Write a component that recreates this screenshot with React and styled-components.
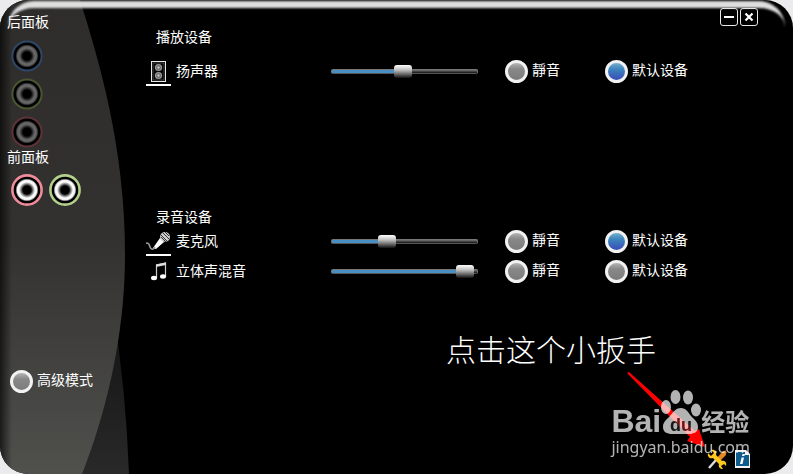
import React, { useState } from "react";
import styled, { createGlobalStyle } from "styled-components";

const GlobalStyle = createGlobalStyle`
  * { box-sizing: border-box; }
  body {
    margin: 0;
    background: #ebebee;
    color: #fff;
    font: 14px/18px "Noto Sans CJK SC", sans-serif;
  }
  button, input { margin: 0; padding: 0; font: inherit; color: inherit; }
`;

const Window = styled.div`
  position: relative;
  display: flex;
  min-height: 100vh;
  overflow: hidden;
  border-radius: 28px;
  background: #000;
`;

const Gloss = styled.div`
  position: absolute;
  top: 1px;
  left: 8px;
  right: 8px;
  height: 48px;
  border-top: 7px solid #dedede;
  border-radius: 26px 26px 0 0;
  filter: blur(1px);
  pointer-events: none;
`;

const Sidebar = styled.aside`
  position: relative;
  display: flex;
  flex-direction: column;
  flex: none;
  width: 130px;
  padding: 13px 7px 81px;
`;

const SidebarShape = styled.svg`
  position: absolute;
  inset: 0;
  width: 100%;
  height: 100%;
`;

const Panel = styled.section`
  position: relative;
`;

const PanelTitle = styled.h2`
  margin: 0;
  padding-bottom: 2px;
  font-size: 14px;
  line-height: 16px;
  font-weight: 400;
`;

const Jacks = styled.div`
  display: flex;
  flex-direction: ${(p) => (p.$stacked ? "column" : "row")};
  gap: 6px;
  padding: ${(p) => (p.$stacked ? "9px 4px 0" : "8px 4px 0")};
`;

const JackButton = styled.button`
  display: block;
  width: 32px;
  height: 32px;
  border: 0;
  border-radius: 50%;
  background: none;
`;

const Main = styled.main`
  display: flex;
  flex-direction: column;
  flex: 1;
  min-width: 0;
`;

const TitleBar = styled.header`
  display: flex;
  justify-content: flex-end;
  gap: 2px;
  padding: 8px 35px 0 0;
`;

const WindowButton = styled.button`
  display: grid;
  place-items: center;
  width: 18px;
  height: 18px;
  border: 1px solid #e8e8e8;
  border-radius: 3px;
  background: #000;
`;

const DeviceGroup = styled.section`
  padding: ${(p) => (p.$first ? "2px 0 0 16px" : "122px 0 0 16px")};
`;

const GroupTitle = styled.h2`
  margin: 0;
  padding: 0 0 ${(p) => (p.$spaced ? "12px" : "2px")} 10px;
  font-size: 14px;
  line-height: 16px;
  font-weight: 400;
`;

const DeviceRow = styled.div`
  display: grid;
  grid-template-columns: 25px 150px minmax(80px, 1fr) 100px 90px;
  align-items: center;
  height: 30px;
  padding-right: 117px;
`;

const DeviceIcon = styled.div`
  display: flex;
  justify-content: center;
  height: 27px;
  border-bottom: 2px solid ${(p) => (p.$active ? "#fff" : "transparent")};
  align-self: end;
`;

const DeviceName = styled.label`
  padding: 0 0 2px 5px;
`;

const Volume = styled.input.attrs({ type: "range" })`
  appearance: none;
  width: calc(100% - 18px);
  height: 14px;
  margin: 0 8px 0 10px;
  background: none;

  &::-webkit-slider-runnable-track {
    height: 5px;
    border: 1px solid #777;
    border-bottom-color: #555;
    border-radius: 2px;
    background: linear-gradient(#4a8fc4, #4a8fc4) 0 0 / var(--fill) 100% no-repeat,
      linear-gradient(#777, #111);
  }
  &::-webkit-slider-thumb {
    appearance: none;
    width: 18px;
    height: 13px;
    margin-top: -5px;
    border-radius: 3px;
    background: linear-gradient(#fff, #bbb 40%, #777 65%, #111);
  }
`;

const Option = styled.label`
  display: flex;
  align-items: center;
  gap: 4px;
  white-space: nowrap;
`;

const OptionText = styled.span`
  padding-bottom: 5px;
`;

const Dot = styled.input`
  appearance: none;
  flex: none;
  width: 23px;
  height: 23px;
  border: 3px solid #f2f2f2;
  border-radius: 50%;
  background: linear-gradient(#b4b4b4, #888 35%, #7c7c7c);

  &:checked {
    background: linear-gradient(#78aed0, #3d86bd 35%, #3a55b8 90%);
  }
`;

const DeviceOption = styled(Option)`
  padding-left: 19px;
`;

const AdvancedOption = styled(Option)`
  position: relative;
  margin-top: auto;
  padding-left: 3px;
`;

const Footer = styled.footer`
  display: flex;
  justify-content: flex-end;
  align-items: center;
  gap: 8px;
  margin-top: auto;
  padding: 0 43px 5px 0;
`;

const ToolButton = styled.button`
  display: block;
  height: 20px;
  border: 0;
  background: none;
`;

const Callout = styled.div`
  position: absolute;
  right: 137px;
  bottom: 106px;
  font-size: 30px;
  font-weight: 300;
  line-height: 40px;
  white-space: nowrap;
`;

const Arrow = styled.svg`
  position: absolute;
  right: 87px;
  bottom: 26px;
  pointer-events: none;
`;

const Watermark = styled.div`
  position: absolute;
  right: 43px;
  bottom: 17px;
  opacity: 0.7;
  pointer-events: none;
`;

const Brand = styled.div`
  display: flex;
  align-items: flex-end;
  height: 48px;
  font: 700 32px/32px "Liberation Sans", sans-serif;
`;

const BrandName = styled.span`
  height: 32px;
`;

const BrandSuffix = styled.span`
  font: 700 24px/32px "Noto Sans CJK SC", sans-serif;
`;

const Site = styled.div`
  font: 16px/20px "Noto Sans", sans-serif;
`;

function Jack({ ring, dim, label }) {
  const id = `jack-${label}`;
  return (
    <JackButton aria-label={label}>
      <svg width="32" height="32" viewBox="0 0 32 32">
        <defs>
          <radialGradient id={id}>
            <stop offset="0.36" stopColor="#000" />
            <stop offset="0.56" stopColor={dim ? "#444" : "#999"} />
            <stop offset="0.7" stopColor={dim ? "#6c6c6c" : "#fff"} />
            <stop offset="0.86" stopColor={dim ? "#5a5a5a" : "#f0f0f0"} />
            <stop offset="1" stopColor="#000" />
          </radialGradient>
        </defs>
        <circle cx="16" cy="16" r="14.6" fill="#000" stroke={ring} strokeWidth={dim ? 2 : 2.6} />
        <circle cx="16" cy="16" r="11.5" fill={`url(#${id})`} />
      </svg>
    </JackButton>
  );
}

function SpeakerIcon() {
  return (
    <svg width="25" height="25" viewBox="0 0 25 25">
      <rect x="5.5" y="2.5" width="14" height="20" fill="#080808" stroke="#e8e8e8" />
      <rect x="7" y="4" width="11" height="17" fill="none" stroke="#666" strokeWidth="0.6" />
      <circle cx="12.5" cy="8.5" r="3.6" fill="#999" />
      <circle cx="12.5" cy="16.5" r="3.6" fill="#999" />
      <circle cx="12.5" cy="8.5" r="2" fill="none" stroke="#666" />
      <circle cx="12.5" cy="16.5" r="2" fill="none" stroke="#666" />
      <circle cx="12.5" cy="8.5" r="0.8" fill="#ccc" />
      <circle cx="12.5" cy="16.5" r="0.8" fill="#ccc" />
    </svg>
  );
}

function MicIcon() {
  return (
    <svg width="25" height="25" viewBox="0 0 25 25">
      <path d="M14 9 18 13 10 20 7 19Z" fill="#fff" />
      <circle cx="19" cy="8" r="5" fill="#ccc" />
      <path d="m15 6 6 6m-4-8 6 6m-4-7 4 4m-8 1 5 5" stroke="#333" strokeWidth="1" />
      <path d="M9 18c-2 3-4 3-5 0s-1-4-4-4" fill="none" stroke="#999" strokeWidth="1.6" />
    </svg>
  );
}

function NotesIcon() {
  return (
    <svg width="25" height="25" viewBox="0 0 25 25">
      <path d="M10.500 19V6l9-2v14" fill="none" stroke="#ccc" strokeWidth="1.2" />
      <path d="M10 5.500 20 3.500V6l-10 2Z" fill="#ddd" />
      <ellipse cx="8" cy="19" rx="3" ry="2.2" fill="#fff" />
      <ellipse cx="17" cy="17.500" rx="3" ry="2.2" fill="#fff" />
    </svg>
  );
}

function Device({ id, name, icon, active, initial, isDefault }) {
  const [level, setLevel] = useState(initial);
  return (
    <DeviceRow>
      <DeviceIcon $active={active}>{icon}</DeviceIcon>
      <DeviceName htmlFor={id}>{name}</DeviceName>
      <Volume
        id={id}
        value={level}
        onChange={(e) => setLevel(Number(e.target.value))}
        style={{ "--fill": `${level}%` }}
      />
      <DeviceOption>
        <Dot type="checkbox" />
        <OptionText>靜音</OptionText>
      </DeviceOption>
      <DeviceOption>
        <Dot type="checkbox" defaultChecked={isDefault} />
        <OptionText>默认设备</OptionText>
      </DeviceOption>
    </DeviceRow>
  );
}

export default function App() {
  return (
    <>
      <GlobalStyle />
      <Window>
        <Sidebar>
          <SidebarShape viewBox="0 0 130 474" preserveAspectRatio="none" aria-hidden="true">
            <defs>
              <linearGradient id="side" x2="0" y2="1">
                <stop offset="0" stopColor="#2e2d2b" />
                <stop offset="0.5" stopColor="#32312f" />
                <stop offset="1" stopColor="#50504d" />
              </linearGradient>
              <linearGradient id="edge">
                <stop offset="0" stopColor="#000" stopOpacity="0.65" />
                <stop offset="1" stopColor="#000" stopOpacity="0" />
              </linearGradient>
              <linearGradient id="under" x2="0" y2="1">
                <stop offset="0.3" stopColor="#181818" />
                <stop offset="1" stopColor="#292929" />
              </linearGradient>
            </defs>
            <path d="M60 300H112Q126 390 129 474H60Z" fill="url(#under)" />
            <path d="M0 0H80C98 58 125 145 125 255C125 340 104 418 82 474H0Z" fill="url(#side)" />
            <rect width="12" height="474" fill="url(#edge)" />
          </SidebarShape>
          <Panel>
            <PanelTitle>后面板</PanelTitle>
            <Jacks $stacked>
              <Jack label="rear-blue" ring="#2d4868" dim />
              <Jack label="rear-green" ring="#4a5630" dim />
              <Jack label="rear-red" ring="#5c3438" dim />
            </Jacks>
          </Panel>
          <Panel>
            <PanelTitle>前面板</PanelTitle>
            <Jacks>
              <Jack label="front-pink" ring="#ef8c99" />
              <Jack label="front-green" ring="#b2cf8c" />
            </Jacks>
          </Panel>
          <AdvancedOption>
            <Dot type="checkbox" />
            <OptionText>高级模式</OptionText>
          </AdvancedOption>
        </Sidebar>
        <Gloss />
        <Main>
          <TitleBar>
            <WindowButton aria-label="最小化">
              <svg width="12" height="12" viewBox="0 0 12 12">
                <path d="M1 6h10" stroke="#fff" strokeWidth="2" />
              </svg>
            </WindowButton>
            <WindowButton aria-label="关闭">
              <svg width="12" height="12" viewBox="0 0 12 12">
                <path d="m2.5 2.5 7 7m0-7-7 7" stroke="#fff" strokeWidth="2.2" />
              </svg>
            </WindowButton>
          </TitleBar>
          <DeviceGroup $first>
            <GroupTitle $spaced>播放设备</GroupTitle>
            <Device id="speaker" name="扬声器" icon={<SpeakerIcon />} active initial={49} isDefault />
          </DeviceGroup>
          <DeviceGroup>
            <GroupTitle>录音设备</GroupTitle>
            <Device id="mic" name="麦克风" icon={<MicIcon />} active initial={36} isDefault />
            <Device id="mix" name="立体声混音" icon={<NotesIcon />} initial={98} />
          </DeviceGroup>
          <Footer>
            <ToolButton aria-label="设置">
              <svg width="20" height="20" viewBox="0 0 20 20">
                <path d="M2 19 9 11" stroke="#ddd" strokeWidth="2.4" />
                <path d="m9.500 9.500 6-7 3-1 1 2-1 3-6 6Z" fill="#e38a24" />
                <path d="M1 4 4 7 7 4 4 1C8 0 10 3 9 6l6 6c3-1 5 2 4 5l-2-2-3 2 2 3c-3 0-5-2-4-5L6 9C3 10 0 8 1 4Z" fill="#ffc81e" />
              </svg>
            </ToolButton>
            <ToolButton aria-label="信息">
              <svg width="15" height="20" viewBox="0 0 15 20">
                <path d="M0 1H11L15 5V19H0Z" fill="#f2f2f2" />
                <path d="M1 3H10V6H14V17H1Z" fill="#105c8c" />
                <path d="M7.500 5H10l-.6 2H7ZM6.600 8.500H9L7.500 15H5Z" fill="#fff" />
              </svg>
            </ToolButton>
          </Footer>
        </Main>
        <Callout>点击这个小扳手</Callout>
        <Arrow width="80" height="76" viewBox="0 0 80 76">
          <path d="M1 1 3 0 69 59 73 57 79 75 61 69 64 65Z" fill="#f00" />
        </Arrow>
        <Watermark>
          <Brand>
            <BrandName>Bai</BrandName>
            <svg width="40" height="48" viewBox="0 0 40 48">
              <g fill="#fff">
                <ellipse cx="5" cy="18" rx="5" ry="7" />
                <ellipse cx="14.500" cy="8" rx="5" ry="7" />
                <ellipse cx="27" cy="8.500" rx="5" ry="7" />
                <ellipse cx="35" cy="21" rx="5" ry="6.500" />
                <path d="M20 19c5 0 7 4 10 8 4 4 7 6 7 11s-4 7-9 7H11c-5 0-9-2-9-7s3-7 7-11c4-5 6-8 11-8Z" />
              </g>
              <text x="9" y="42" fill="#222" fontFamily="Liberation Sans" fontWeight="700" fontSize="18">du</text>
            </svg>
            <BrandSuffix>经验</BrandSuffix>
          </Brand>
          <Site>jingyan.baidu.com</Site>
        </Watermark>
      </Window>
    </>
  );
}
